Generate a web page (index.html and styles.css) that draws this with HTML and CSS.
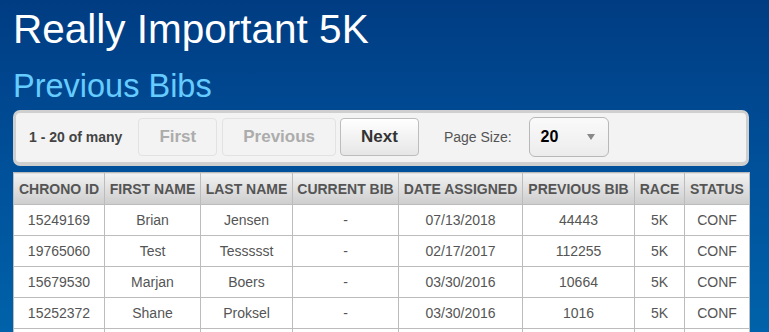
FILE: index.html
```html
<!DOCTYPE html>
<html lang="en">
<head>
  <meta charset="UTF-8" />
  <title>Previous Bibs</title>
  <link rel="stylesheet" href="styles.css">
</head>
<body>
  <h1 class="race-title">Really Important 5K</h1>
  <h2 class="page-title">Previous Bibs</h2>

  <!-- pager toolbar -->
  <div class="pager">
    <span class="pager-count">1 - 20 of many</span>
    <button class="pager-btn" disabled>First</button>
    <button class="pager-btn" disabled>Previous</button>
    <button class="pager-btn active">Next</button>
    <span class="pager-label">Page Size:</span>
    <div class="page-size">
      <span>20</span>
      <span class="caret"></span>
    </div>
  </div>

  <table class="bibs">
    <thead>
      <tr>
        <th class="c-id">Chrono ID</th>
        <th class="c-first">First Name</th>
        <th class="c-last">Last Name</th>
        <th class="c-cur">Current Bib</th>
        <th class="c-date">Date Assigned</th>
        <th class="c-prev">Previous Bib</th>
        <th class="c-race">Race</th>
        <th class="c-status">Status</th>
      </tr>
    </thead>
    <tbody>
      <tr><td>15249169</td><td>Brian</td><td>Jensen</td><td>-</td><td>07/13/2018</td><td>44443</td><td>5K</td><td>CONF</td></tr>
      <tr><td>19765060</td><td>Test</td><td>Tessssst</td><td>-</td><td>02/17/2017</td><td>112255</td><td>5K</td><td>CONF</td></tr>
      <tr><td>15679530</td><td>Marjan</td><td>Boers</td><td>-</td><td>03/30/2016</td><td>10664</td><td>5K</td><td>CONF</td></tr>
      <tr><td>15252372</td><td>Shane</td><td>Proksel</td><td>-</td><td>03/30/2016</td><td>1016</td><td>5K</td><td>CONF</td></tr>
      <tr class="more"><td></td><td></td><td></td><td></td><td></td><td></td><td></td><td></td></tr>
    </tbody>
  </table>
</body>
</html>
```

FILE: styles.css
```css
/* Page */
html, body {
  height: 100%;
}
body {
  margin: 0;
  padding: 0 20px 0 13px;
  font-family: "Liberation Sans", Arial, sans-serif;
  background: linear-gradient(to bottom, #003c82 0%, #00509a 50%, #0062aa 100%);
  overflow: hidden;
}
.race-title {
  margin: 6px 0 0;
  font-size: 40.5px;
  line-height: 47px;
  font-weight: normal;
  color: #fff;
}
.page-title {
  margin: 15px 0 0;
  font-size: 32.5px;
  line-height: 36px;
  font-weight: normal;
  color: #66ccff;
}

/* Pager toolbar */
.pager {
  margin-top: 6px;
  width: 736px;
  box-sizing: border-box;
  height: 56px;
  display: flex;
  align-items: center;
  padding: 0 0 1px 13px;
  background: #f3f3f3;
  border: 3px solid #cfcfcf;
  border-bottom-width: 4px;
  border-radius: 7px;
}
.pager-count {
  font-size: 14px;
  font-weight: bold;
  color: #444;
  margin-right: 16px;
}
.pager-btn {
  height: 38px;
  margin-right: 5px;
  padding: 0 20px;
  font-family: inherit;
  font-size: 17px;
  font-weight: bold;
  border-radius: 4px;
  border: 1px solid #bdbdbd;
  color: #333;
  background: linear-gradient(to bottom, #ffffff, #e6e6e6);
}
.pager-btn:disabled {
  color: #acacac;
  border-color: #e2e2e2;
  background: #f3f3f3;
}
.pager-btn.active {
  margin-left: -1px;
  margin-right: 0;
}
.pager-label {
  margin-left: 25px;
  font-size: 14px;
  color: #555;
}
.page-size {
  margin-left: 17px;
  width: 80px;
  height: 40px;
  box-sizing: border-box;
  display: flex;
  align-items: center;
  justify-content: space-between;
  padding: 0 13px 0 11px;
  border: 1px solid #b8b8b8;
  border-radius: 6px;
  background: linear-gradient(to bottom, #fafafa, #ececec);
  font-size: 16px;
  font-weight: bold;
  color: #000;
}
.caret {
  width: 0;
  height: 0;
  border-left: 4px solid transparent;
  border-right: 4px solid transparent;
  border-top: 6px solid #888;
}

/* Bibs table */
.bibs {
  margin-top: 6px;
  width: 736px;
  table-layout: fixed;
  border-collapse: collapse;
  background: #fff;
  font-size: 14px;
  color: #555;
}
.bibs th, .bibs td {
  border: 1px solid #bcbcbc;
  text-align: center;
  height: 30px;
  padding: 0;
  white-space: nowrap;
}
.bibs th {
  height: 31px;
  font-size: 14px;
  font-weight: bold;
  text-transform: uppercase;
  color: #555;
  background: linear-gradient(to bottom, #f2f2f2, #cdcdcd);
}
.c-id { width: 90px; }
.c-first { width: 95px; }
.c-last { width: 91px; }
.c-cur { width: 105px; }
.c-date { width: 123px; }
.c-prev { width: 111px; }
.c-race { width: 49px; }
.c-status { width: 64px; }
```
